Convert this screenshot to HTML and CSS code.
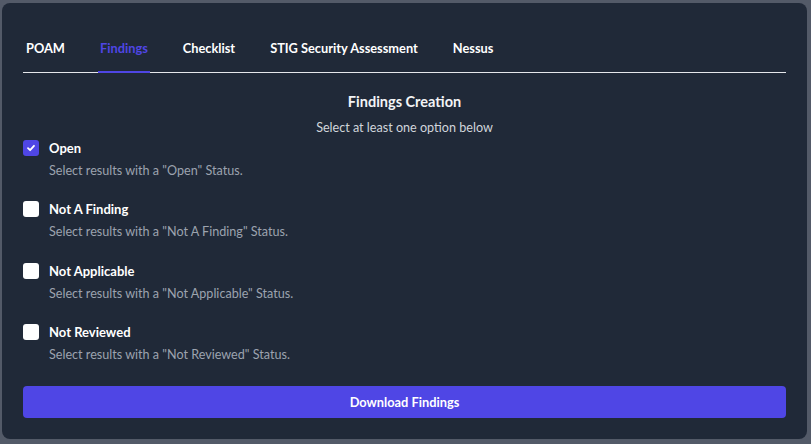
FILE: index.html
```html
<!DOCTYPE html>
<html>
<head>
<meta charset="utf-8">
<link rel="stylesheet" href="styles.css">
</head>
<body>
<div class="modal">
  <nav class="tabs">
    <span class="tab">POAM</span>
    <span class="tab active">Findings</span>
    <span class="tab">Checklist</span>
    <span class="tab">STIG Security Assessment</span>
    <span class="tab">Nessus</span>
  </nav>
  <h2 class="title">Findings Creation</h2>
  <p class="subtitle">Select at least one option below</p>
  <div class="options">
    <div class="option">
      <div class="row">
        <span class="box checked"><svg width="10" height="10" viewBox="0 0 10 10"><path d="M2 5.2 L4.1 7.2 L8 2.8" fill="none" stroke="#fff" stroke-width="1.8" stroke-linecap="round" stroke-linejoin="round"/></svg></span>
        <span class="label">Open</span>
      </div>
      <p class="desc">Select results with a "Open" Status.</p>
    </div>
    <div class="option">
      <div class="row"><span class="box"></span><span class="label">Not A Finding</span></div>
      <p class="desc">Select results with a "Not A Finding" Status.</p>
    </div>
    <div class="option">
      <div class="row"><span class="box"></span><span class="label">Not Applicable</span></div>
      <p class="desc">Select results with a "Not Applicable" Status.</p>
    </div>
    <div class="option">
      <div class="row"><span class="box"></span><span class="label">Not Reviewed</span></div>
      <p class="desc">Select results with a "Not Reviewed" Status.</p>
    </div>
  </div>
  <button class="download">Download Findings</button>
</div>
</body>
</html>
```
FILE: styles.css
```css
html, body {
  margin: 0;
  padding: 0;
}
body {
  background: #535a68;
  font-family: "Lato", "Open Sans", sans-serif;
  width: 811px;
  height: 444px;
  overflow: hidden;
}
.modal {
  box-sizing: border-box;
  margin: 3px 0 0 2px;
  width: 805px;
  height: 436px;
  background: #202938;
  border-radius: 8px;
  padding: 36px 21px 21px 21px;
  display: flex;
  flex-direction: column;
}
.tabs {
  display: flex;
  gap: 31px;
  border-bottom: 1px solid #e5e7eb;
  padding-left: 1px;
}
.tab {
  color: #ffffff;
  font-weight: 700;
  font-size: 12.8px;
  line-height: 18px;
  padding: 0 2px 14px 2px;
  margin-bottom: -1px;
  border-bottom: 2px solid transparent;
}
.tab.active {
  color: #4f46e5;
  border-bottom-color: #4f46e5;
}
.title {
  margin: 20px 0 0 0;
  text-align: center;
  color: #f3f4f6;
  font-size: 14.5px;
  font-weight: 700;
  line-height: 18px;
}
.subtitle {
  margin: 9px 0 0 0;
  text-align: center;
  color: #d1d5db;
  font-size: 12.6px;
  line-height: 16px;
}
.options {
  margin-top: 4px;
  display: flex;
  flex-direction: column;
  gap: 22.4px;
}
.row {
  display: flex;
  align-items: center;
  gap: 10px;
  height: 16px;
}
.box {
  width: 16px;
  height: 16px;
  border-radius: 3px;
  background: #ffffff;
  display: flex;
  align-items: center;
  justify-content: center;
  flex: none;
}
.box.checked {
  background: #4f46e5;
}
.label {
  color: #ffffff;
  font-weight: 700;
  font-size: 13px;
  line-height: 16px;
}
.desc {
  margin: 7px 0 0 26px;
  color: #9ca3af;
  font-size: 12.6px;
  line-height: 16px;
}
.download {
  margin-top: 23px;
  height: 32px;
  border: none;
  border-radius: 4px;
  background: #4f46e5;
  color: #ffffff;
  font-family: inherit;
  font-weight: 700;
  font-size: 12.8px;
}
```
